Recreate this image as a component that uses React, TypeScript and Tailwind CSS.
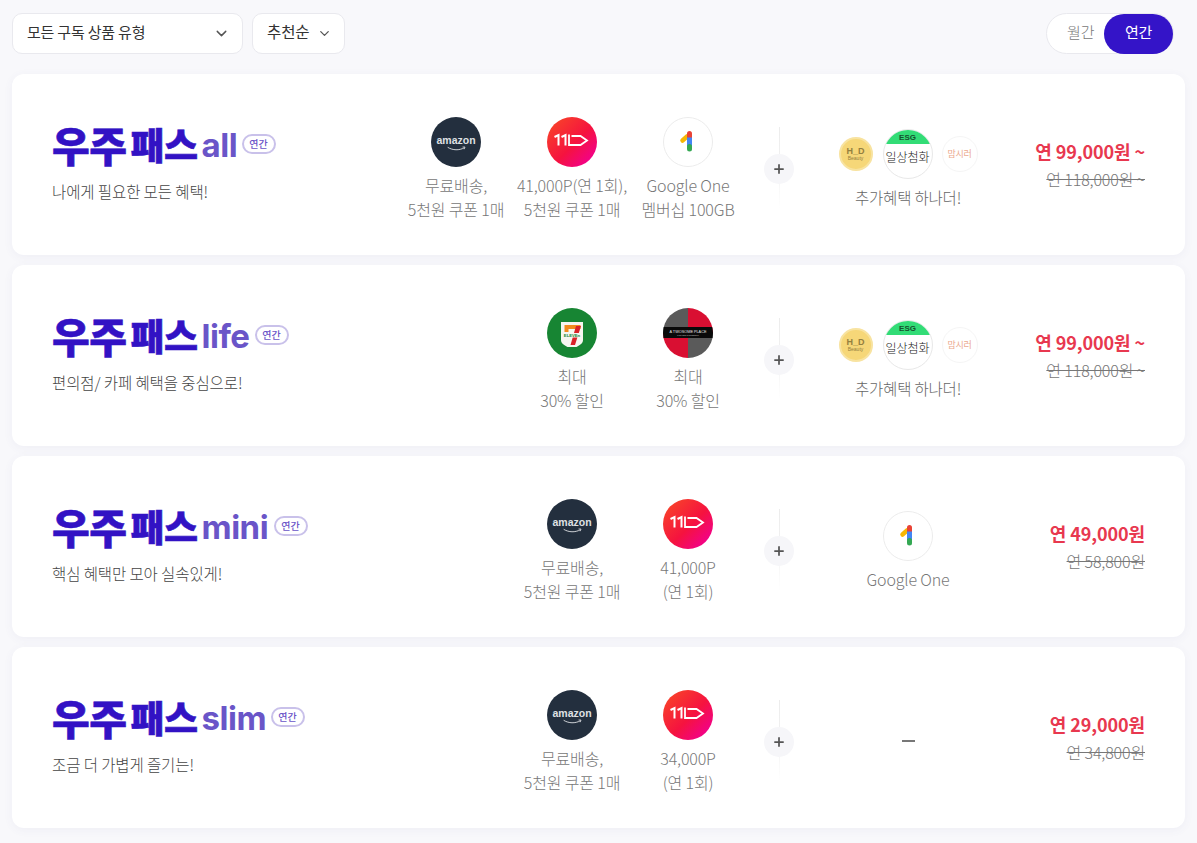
import { ChevronDown, Plus } from 'lucide-react'

const FONT = "font-['Noto_Sans_CJK_KR','Noto_Sans',sans-serif]"

function Amazon() {
  return (
    <svg viewBox="0 0 50 50" className="w-[50px] h-[50px]">
      <circle cx="25" cy="25" r="25" fill="#232f3e" />
      <text x="25" y="27" textAnchor="middle" fontSize="10.5" fontWeight="700" fill="#dfe1e4" fontFamily="Liberation Sans, sans-serif">amazon</text>
      <path d="M17 30.500c5 3 11 3 16 .5" fill="none" stroke="#dfe1e4" strokeWidth="0.9" strokeLinecap="round" />
      <path d="M31.500 30h2.500l-.8 2.200" fill="none" stroke="#dfe1e4" strokeWidth="0.8" />
    </svg>
  )
}

function Eleven({ id }: { id: string }) {
  return (
    <svg viewBox="0 0 50 50" className="w-[50px] h-[50px]">
      <defs>
        <linearGradient id={id} x1="0.1" y1="0.1" x2="0.9" y2="0.9">
          <stop offset="0" stopColor="#f8412a" />
          <stop offset="0.55" stopColor="#f5133f" />
          <stop offset="1" stopColor="#f2008f" />
        </linearGradient>
      </defs>
      <circle cx="25" cy="25" r="25" fill={`url(#${id})`} />
      <path d="M7.500 20l4-2v10.500M14.500 20l4-2v10.500" fill="none" stroke="#fff" strokeWidth="2" />
      <path d="M24.500 19h9l6.500 4.500-6.500 4.500h-11.500v-10.500" fill="none" stroke="#fff" strokeWidth="1.800" />
    </svg>
  )
}

function GoogleOne() {
  return (
    <svg viewBox="0 0 50 50" className="w-[50px] h-[50px]">
      <circle cx="25" cy="25" r="24.500" fill="#fff" stroke="#ececec" />
      <path d="M19.500 23.500l4.500-4" stroke="#f6b704" strokeWidth="4.500" strokeLinecap="round" />
      <path d="M26.500 16.500v5" stroke="#e94235" strokeWidth="5" strokeLinecap="round" />
      <path d="M26.500 20.500v9" stroke="#4285f4" strokeWidth="5" />
      <path d="M26.500 29.500v2.500" stroke="#34a853" strokeWidth="5" strokeLinecap="round" />
    </svg>
  )
}

function SevenEleven() {
  return (
    <svg viewBox="0 0 50 50" className="w-[50px] h-[50px]">
      <circle cx="25" cy="25" r="25" fill="#178533" />
      <path d="M14 14h22v18c0 3.500-3 5-6.500 7h-9c-3.500-2-6.500-3.500-6.500-7z" fill="#f6f6f0" />
      <path d="M17.500 17h16v4h-12v3h-4z" fill="#f28a1c" />
      <path d="M29 18h5l-6 19h-4.500z" fill="#d92128" />
      <rect x="16" y="25" width="18" height="4.500" fill="#f6f6f0" />
      <text x="25" y="29" textAnchor="middle" fontSize="4.200" fontWeight="700" fill="#178533" fontFamily="Liberation Sans, sans-serif">ELEVEn</text>
    </svg>
  )
}

function Treasure() {
  return (
    <svg viewBox="0 0 50 50" className="w-[50px] h-[50px]">
      <defs>
        <clipPath id="tp">
          <circle cx="25" cy="25" r="25" />
        </clipPath>
      </defs>
      <g clipPath="url(#tp)">
        <rect width="25" height="25" fill="#5a5a5a" />
        <rect x="25" width="25" height="25" fill="#d90f32" />
        <rect y="25" width="25" height="25" fill="#d90f32" />
        <rect x="25" y="25" width="25" height="25" fill="#5a5a5a" />
        <rect y="19" width="50" height="11" fill="#0a0a0a" />
      </g>
      <text x="25" y="24.500" textAnchor="middle" fontSize="3.800" fill="#e6e6e6" fontFamily="Liberation Sans, sans-serif">A TWOSOME PLACE</text>
      <text x="25" y="28" textAnchor="middle" fontSize="2.200" fill="#aaa" fontFamily="Liberation Sans, sans-serif">COFFEE &amp; DESSERT</text>
    </svg>
  )
}

function ExtraLogos() {
  return (
    <div className="flex items-center justify-center">
      <div className="w-[34px] h-[34px] rounded-full bg-[#f6d778] border-2 border-[#f8e3a0] flex flex-col items-center justify-center text-[#94803f] leading-none">
        <span className="text-[9px] font-semibold font-['Liberation_Sans',sans-serif]">H_D</span>
        <span className="text-[5px] font-['Liberation_Sans',sans-serif]">Beauty</span>
      </div>
      <div className="ml-[10px] w-[50px] h-[50px] rounded-full bg-white border border-[#e8e8e8] overflow-hidden flex flex-col items-center">
        <div className="w-full h-[14px] bg-[#32dc76] text-[#16502e] text-[8px] font-bold leading-[16px] text-center font-['Liberation_Sans',sans-serif]">ESG</div>
        <div className="mt-[4px] text-[12px] leading-[18px] whitespace-nowrap text-[#222] font-light">일상첨화</div>
      </div>
      <div className="ml-[9px] w-[36px] h-[36px] rounded-full bg-white border border-[#f5f5f5] flex items-center justify-center">
        <span className="text-[9px] text-[#eba88d] whitespace-nowrap tracking-[-0.3px]">맘시러</span>
      </div>
    </div>
  )
}

function Logo({ name, width }: { name: string; width: string }) {
  return (
    <div className="flex items-center h-[42px]">
      <span className="text-[41px] leading-[42px] font-black text-[#3212c4] tracking-[-0.5px] [-webkit-text-stroke:0.6px_#3212c4]">우주</span>
      <span className="ml-[4px] text-[37px] leading-[42px] font-black text-[#3212c4] tracking-[-0.5px] [-webkit-text-stroke:0.6px_#3212c4]">패스</span>
      <span className={`ml-[4px] mt-[3px] text-[33px] leading-[42px] font-bold text-[#6a55c8] tracking-[-0.5px] font-['Inter',sans-serif] ${width}`}>{name}</span>
      <span className="ml-[3px] w-[34px] h-[20px] rounded-full border-2 border-[#c9c1ea] text-[#6a55c8] text-[10px] font-medium leading-[15px] text-center">연간</span>
    </div>
  )
}

function Benefit({ icon, lines }: { icon: React.ReactNode; lines: string[] }) {
  return (
    <div className="w-[116px] flex flex-col items-center">
      {icon}
      <div className="mt-[6px] mb-[2px] text-[16px] leading-[24px] font-light text-[#777] text-center whitespace-nowrap tracking-[-0.15px]">
        {lines.map((line) => (
          <div key={line}>{line}</div>
        ))}
      </div>
    </div>
  )
}

type Product = {
  name: string
  nameWidth: string
  desc: string
  benefits: { icon: React.ReactNode; lines: string[] }[]
  extra: 'logos' | 'google' | 'none'
  price: string
  original: string
}

const PRODUCTS: Product[] = [
  {
    name: 'all',
    nameWidth: 'w-[37px]',
    desc: '나에게 필요한 모든 혜택!',
    benefits: [
      { icon: <Amazon />, lines: ['무료배송,', '5천원 쿠폰 1매'] },
      { icon: <Eleven id="e1" />, lines: ['41,000P(연 1회),', '5천원 쿠폰 1매'] },
      { icon: <GoogleOne />, lines: ['Google One', '멤버십 100GB'] },
    ],
    extra: 'logos',
    price: '연 99,000원 ~',
    original: '연 118,000원 ~',
  },
  {
    name: 'life',
    nameWidth: 'w-[50px]',
    desc: '편의점/ 카페 혜택을 중심으로!',
    benefits: [
      { icon: <SevenEleven />, lines: ['최대', '30% 할인'] },
      { icon: <Treasure />, lines: ['최대', '30% 할인'] },
    ],
    extra: 'logos',
    price: '연 99,000원 ~',
    original: '연 118,000원 ~',
  },
  {
    name: 'mini',
    nameWidth: 'w-[69px]',
    desc: '핵심 혜택만 모아 실속있게!',
    benefits: [
      { icon: <Amazon />, lines: ['무료배송,', '5천원 쿠폰 1매'] },
      { icon: <Eleven id="e2" />, lines: ['41,000P', '(연 1회)'] },
    ],
    extra: 'google',
    price: '연 49,000원',
    original: '연 58,800원',
  },
  {
    name: 'slim',
    nameWidth: 'w-[66px]',
    desc: '조금 더 가볍게 즐기는!',
    benefits: [
      { icon: <Amazon />, lines: ['무료배송,', '5천원 쿠폰 1매'] },
      { icon: <Eleven id="e3" />, lines: ['34,000P', '(연 1회)'] },
    ],
    extra: 'none',
    price: '연 29,000원',
    original: '연 34,800원',
  },
]

function ProductCard({ product }: { product: Product }) {
  return (
    <div className="h-[181px] rounded-[12px] bg-white shadow-[0_2px_10px_rgba(90,80,160,0.06)] pl-[40px] pr-[40px] pt-[10px] flex items-center">
      <div className="flex-1 mb-[14px]">
        <Logo name={product.name} width={product.nameWidth} />
        <p className="mt-[14px] text-[15.500px] leading-[24px] font-light text-[#444] tracking-[-0.1px]">{product.desc}</p>
      </div>

      <div className="flex">
        {product.benefits.map((b, i) => (
          <Benefit key={i} icon={b.icon} lines={b.lines} />
        ))}
      </div>

      {/* plus divider */}
      <div className="ml-[18px] mb-[4px] w-[30px] h-[82px] relative flex justify-center">
        <div className="w-px h-full bg-gradient-to-b from-[#ececec] via-[#f2f2f2] to-transparent" />
        <div className="absolute top-[27px] w-[30px] h-[30px] rounded-full bg-[#f6f6f9] flex items-center justify-center">
          <Plus size={14} strokeWidth={3} className="text-[#555]" />
        </div>
      </div>

      <div className="w-[228px] flex flex-col items-center">
        {product.extra === 'logos' && (
          <>
            <ExtraLogos />
            <div className="mt-[6px] mb-[2px] text-[15.500px] leading-[24px] font-light text-[#666] tracking-[-0.2px]">추가혜택 하나더!</div>
          </>
        )}
        {product.extra === 'google' && (
          <>
            <GoogleOne />
            <div className="mt-[6px] mb-[2px] text-[16px] leading-[24px] font-light text-[#777] tracking-[-0.15px]">Google One</div>
          </>
        )}
        {product.extra === 'none' && <div className="mb-[3px] w-[13px] h-[2px] bg-[#777]" />}
      </div>

      <div className="w-[123px] mb-[9px] text-right whitespace-nowrap">
        <div className="text-[18px] leading-[24px] font-bold text-[#e8384f] tracking-[-0.1px]">{product.price}</div>
        <div className="mt-[4px] text-[16px] leading-[24px] font-light text-[#777] line-through tracking-[-0.15px]">{product.original}</div>
      </div>
    </div>
  )
}

export default function App() {
  return (
    <div className={`min-h-[843px] bg-[#f8f8fb] px-[12px] pt-[13px] ${FONT}`}>
      <div className="flex items-center h-[41px] mb-[20px]">
        <button className="w-[231px] h-[41px] rounded-[10px] bg-white border border-[#e9e9ee] pl-[14px] pr-[12px] pb-[3px] flex items-center justify-between text-[15px] text-[#333] tracking-[-0.2px]">
          모든 구독 상품 유형
          <ChevronDown size={17} className="text-[#555] mt-[3px]" />
        </button>
        <button className="ml-[9px] w-[93px] h-[41px] rounded-[10px] bg-white border border-[#e9e9ee] pl-[14px] pr-[12px] pb-[3px] flex items-center justify-between text-[15.500px] text-[#333] tracking-[-0.1px]">
          추천순
          <ChevronDown size={15} className="text-[#555] mt-[3px]" />
        </button>
        <div className="ml-auto mr-[11px] w-[128px] h-[41px] rounded-full bg-white border border-[#e9e9ee] flex items-center justify-between">
          <span className="pl-[20px] pb-[2px] text-[15px] font-light text-[#777] tracking-[-0.1px]">월간</span>
          <span className="w-[69px] h-[40px] rounded-full bg-[#3414c8] text-white text-[15px] leading-[36px] text-center tracking-[-0.2px]">연간</span>
        </div>
      </div>

      <div className="flex flex-col gap-[10px]">
        {PRODUCTS.map((p) => (
          <ProductCard key={p.name} product={p} />
        ))}
      </div>
    </div>
  )
}
